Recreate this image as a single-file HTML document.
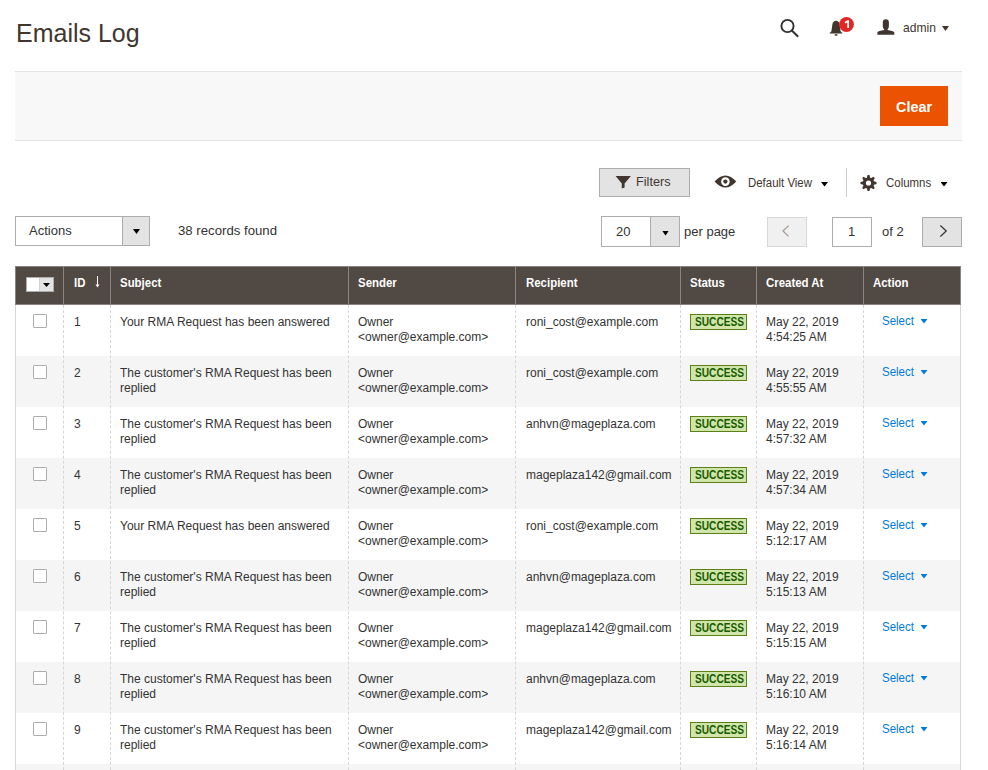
<!DOCTYPE html>
<html><head><meta charset="utf-8">
<style>
html,body{margin:0;padding:0;background:#fff;width:988px;height:770px;overflow:hidden;position:relative;font-family:"Liberation Sans",sans-serif;color:#333}
.a{position:absolute}
.title{position:absolute;left:16px;top:16.5px;font-size:25px;color:#41362f;line-height:32px;white-space:nowrap}
.bar{position:absolute;left:15px;top:71px;width:947px;height:68px;background:#f8f8f8;border-top:1px solid #e3e3e3;border-bottom:1px solid #e3e3e3}
.clear{position:absolute;left:880px;top:86px;width:68px;height:40px;background:#eb5202;color:#fff;font-weight:bold;font-size:14.4px;line-height:42px;text-align:center}
.btn{position:absolute;box-sizing:border-box;border:1px solid #adadad;background:#e3e3e3}
.txt{position:absolute;white-space:nowrap;font-size:13px;color:#333}
.tri{position:absolute;width:7px;height:5px;background:#000;clip-path:polygon(0 0,100% 0,50% 100%)}
.hdr{position:absolute;left:15px;top:266px;width:946px;height:39px;background:#514943;box-sizing:border-box;border:1px solid #8a837f}
.th{position:absolute;top:275px;font-size:13px;font-weight:bold;color:#fff;white-space:nowrap;line-height:16px;transform:scaleX(0.88);transform-origin:0 0}
.hvd{position:absolute;top:266px;width:1px;height:39px;background:#8a837f}
.row{position:absolute;left:15px;width:946px;height:51px}
.row .t{position:absolute;top:10px;font-size:12px;line-height:15px;white-space:nowrap;margin-left:-15px}
.cb{position:absolute;left:18px;top:9px;width:14px;height:14px;box-sizing:border-box;border:1px solid #adadad;border-radius:1px;background:#fff}
.badge{position:absolute;left:675px;top:9px;width:57px;height:16px;box-sizing:border-box;background:#d0e5a9;border:1px solid #5b8116;color:#185b00;font-weight:bold;font-size:12px;line-height:14px;text-align:left;padding-left:4px;white-space:nowrap}
.badge span{display:inline-block;transform:scaleX(0.845);transform-origin:0 0}
.sel{position:absolute;left:867px;top:9px;font-size:12.3px;line-height:15px;color:#007bdb}
.sel span{display:inline-block;transform:scaleX(0.935);transform-origin:0 0}
.sel i{position:absolute;left:38.5px;top:5px;width:7px;height:4.5px;background:#007bdb;clip-path:polygon(0 0,100% 0,50% 100%)}
.vd{position:absolute;top:305px;height:465px;width:0;border-left:1px dashed #d6d6d6}
.lb{position:absolute;top:305px;height:465px;width:1px;background:#d6d6d6}
</style></head><body>
<div class="title">Emails Log</div>

<!-- header icons -->
<svg class="a" style="left:778px;top:17px" width="22" height="22" viewBox="0 0 22 22"><circle cx="9.5" cy="9" r="6.1" fill="none" stroke="#303030" stroke-width="1.9"/><line x1="13.8" y1="13.5" x2="20.2" y2="19.8" stroke="#303030" stroke-width="2"/></svg>
<svg class="a" style="left:828px;top:19px" width="18" height="18" viewBox="0 0 18 18"><path d="M8 1.8C10 1.8 11.2 3.4 11.6 5.2L12.6 12.2L14.6 14.6H1.4L3.4 12.2L4.4 5.2C4.8 3.4 6 1.8 8 1.8z" fill="#41362f"/><rect x="6.8" y="15.2" width="2.6" height="1.5" fill="#41362f"/></svg>
<svg class="a" style="left:839px;top:17px" width="15" height="15" viewBox="0 0 15 15"><circle cx="7.5" cy="7.5" r="7.4" fill="#e22626"/><path d="M5.6 5.0L8.4 3.2H10V11H8.3V5.4L6.2 6.4z" fill="#fff"/></svg>
<svg class="a" style="left:877px;top:18px" width="18" height="18" viewBox="0 0 18 18"><path d="M8.85 1.3C10.8 1.3 11.9 2.3 11.9 4.2V8.2C11.9 9.6 11.2 10.6 10.6 11.3V12C13.5 12.5 17.3 13.2 17.3 14.5V16.8H0.4V14.5C0.4 13.2 4.2 12.5 7.1 12V11.3C6.5 10.6 5.8 9.6 5.8 8.2V4.2C5.8 2.3 6.9 1.3 8.85 1.3z" fill="#41362f"/></svg>
<div class="txt" style="left:903px;top:20px;font-size:12.1px;color:#41362f;line-height:16px">admin</div>
<div class="tri" style="left:942px;top:26px;background:#41362f"></div>

<div class="bar"></div>
<div class="clear">Clear</div>

<!-- filters row -->
<div class="btn" style="left:599px;top:168px;width:91px;height:29px"></div>
<svg class="a" style="left:615px;top:176px" width="17" height="13" viewBox="0 0 17 13"><path d="M0.6 0H15.9L9.6 7.6V11.6L6.8 12.4V7.6Z" fill="#41362f"/></svg>
<div class="txt" style="left:636px;top:174px;font-size:12.7px;color:#41362f;line-height:16px">Filters</div>
<svg class="a" style="left:714px;top:175px" width="23" height="13" viewBox="0 0 23 13"><path d="M0.5 6.5Q11.4 -5.5 22.3 6.5Q11.4 18.5 0.5 6.5z" fill="#41362f"/><circle cx="11.4" cy="6.6" r="4.3" fill="#fff"/><circle cx="11.4" cy="6.6" r="2.1" fill="#41362f"/></svg>
<div class="txt" style="left:748px;top:175px;font-size:12px;color:#41362f;line-height:16px;transform:scaleX(0.953);transform-origin:0 0">Default View</div>
<div class="tri" style="left:821px;top:182px;height:4.5px"></div>
<div class="a" style="left:846px;top:168px;width:1px;height:29px;background:#cccccc"></div>
<svg class="a" style="left:860px;top:175px" width="17" height="16" viewBox="0 0 17 16"><path fill="#41362f" fill-rule="evenodd" d="M13.00 6.10 L16.50 7.05 L16.50 8.95 L13.00 9.90ZM13.03 9.84 L14.83 12.99 L13.49 14.33 L10.34 12.53ZM10.40 12.50 L9.45 16.00 L7.55 16.00 L6.60 12.50ZM6.66 12.53 L3.51 14.33 L2.17 12.99 L3.97 9.84ZM4.00 9.90 L0.50 8.95 L0.50 7.05 L4.00 6.10ZM3.97 6.16 L2.17 3.01 L3.51 1.67 L6.66 3.47ZM6.60 3.50 L7.55 0.00 L9.45 -0.00 L10.40 3.50ZM10.34 3.47 L13.49 1.67 L14.83 3.01 L13.03 6.16Z"/><circle cx="8.5" cy="8" r="5.6" fill="#41362f"/><circle cx="8.5" cy="8" r="2.6" fill="#fff"/></svg>
<div class="txt" style="left:886px;top:175px;font-size:12px;color:#41362f;line-height:16px;transform:scaleX(0.955);transform-origin:0 0">Columns</div>
<div class="tri" style="left:940.5px;top:182px;height:4.5px"></div>

<!-- actions row -->
<div class="a" style="left:15px;top:216px;width:135px;height:30px;box-sizing:border-box;border:1px solid #adadad;background:#fff"></div>
<div class="a" style="left:122px;top:216px;width:28px;height:30px;box-sizing:border-box;border:1px solid #adadad;background:#e3e3e3"></div>
<div class="tri" style="left:133px;top:229px"></div>
<div class="txt" style="left:29px;top:223px;line-height:16px">Actions</div>
<div class="txt" style="left:178px;top:223px;font-size:13.2px;line-height:16px">38 records found</div>

<div class="a" style="left:601px;top:216px;width:79px;height:31px;box-sizing:border-box;border:1px solid #adadad;background:#fff"></div>
<div class="a" style="left:650px;top:216px;width:30px;height:31px;box-sizing:border-box;border:1px solid #adadad;background:#e3e3e3"></div>
<div class="tri" style="left:662px;top:230.5px"></div>
<div class="txt" style="left:616px;top:224px;line-height:16px">20</div>
<div class="txt" style="left:684px;top:224px;line-height:16px">per page</div>

<div class="a" style="left:767px;top:217px;width:40px;height:30px;box-sizing:border-box;border:1px solid #d6d6d6;background:#f0f0f0"></div>
<svg class="a" style="left:780.5px;top:223.5px" width="10" height="14" viewBox="0 0 10 14"><path d="M7.6 1.6L2 7l5.6 5.4" fill="none" stroke="#a79d95" stroke-width="1.3"/></svg>
<div class="a" style="left:832px;top:217px;width:40px;height:30px;box-sizing:border-box;border:1px solid #adadad;background:#fff"></div>
<div class="txt" style="left:848px;top:224px;line-height:16px">1</div>
<div class="txt" style="left:882px;top:224px;line-height:16px">of 2</div>
<div class="btn" style="left:922px;top:217px;width:40px;height:30px"></div>
<svg class="a" style="left:937px;top:223.5px" width="12" height="14" viewBox="0 0 12 14"><path d="M3.4 1.6L9.2 7l-5.8 5.4" fill="none" stroke="#41362f" stroke-width="1.3"/></svg>

<!-- table -->
<div class="hdr"></div>
<div class="hvd" style="left:63px"></div><div class="hvd" style="left:110px"></div><div class="hvd" style="left:348px"></div><div class="hvd" style="left:515px"></div><div class="hvd" style="left:680px"></div><div class="hvd" style="left:756px"></div><div class="hvd" style="left:863px"></div>
<div class="a" style="left:26px;top:277px;width:28px;height:15px;box-sizing:border-box;border:1px solid #adadad;background:#e3e3e3"></div>
<div class="a" style="left:27px;top:278px;width:12px;height:13px;background:#fff;border-right:1px solid #d0d0d0"></div>
<div class="a" style="left:43px;top:283px;width:7px;height:4px;background:#000;clip-path:polygon(0 0,100% 0,50% 100%)"></div>
<div class="th" style="left:74px">ID</div>
<svg class="a" style="left:94px;top:276px" width="8" height="12" viewBox="0 0 8 12"><path d="M3.5 0v10" stroke="#fff" stroke-width="1"/><path d="M1.5 8.5h4l-2 3z" fill="#fff"/></svg>
<div class="th" style="left:120px">Subject</div>
<div class="th" style="left:358px">Sender</div>
<div class="th" style="left:526px">Recipient</div>
<div class="th" style="left:690px">Status</div>
<div class="th" style="left:766px">Created At</div>
<div class="th" style="left:873px">Action</div>

<div class="row" style="top:305px;background:#fff">
<div class="cb"></div>
<div class="t" style="left:74px">1</div>
<div class="t" style="left:120px">Your RMA Request has been answered</div>
<div class="t" style="left:358px">Owner<br>&lt;owner@example.com&gt;</div>
<div class="t" style="left:526px">roni_cost@example.com</div>
<div class="badge"><span>SUCCESS</span></div>
<div class="t" style="left:766px">May 22, 2019<br>4:54:25 AM</div>
<div class="sel"><span>Select</span><i></i></div>
</div><div class="row" style="top:356px;background:#f5f5f5">
<div class="cb"></div>
<div class="t" style="left:74px">2</div>
<div class="t" style="left:120px">The customer's RMA Request has been<br>replied</div>
<div class="t" style="left:358px">Owner<br>&lt;owner@example.com&gt;</div>
<div class="t" style="left:526px">roni_cost@example.com</div>
<div class="badge"><span>SUCCESS</span></div>
<div class="t" style="left:766px">May 22, 2019<br>4:55:55 AM</div>
<div class="sel"><span>Select</span><i></i></div>
</div><div class="row" style="top:407px;background:#fff">
<div class="cb"></div>
<div class="t" style="left:74px">3</div>
<div class="t" style="left:120px">The customer's RMA Request has been<br>replied</div>
<div class="t" style="left:358px">Owner<br>&lt;owner@example.com&gt;</div>
<div class="t" style="left:526px">anhvn@mageplaza.com</div>
<div class="badge"><span>SUCCESS</span></div>
<div class="t" style="left:766px">May 22, 2019<br>4:57:32 AM</div>
<div class="sel"><span>Select</span><i></i></div>
</div><div class="row" style="top:458px;background:#f5f5f5">
<div class="cb"></div>
<div class="t" style="left:74px">4</div>
<div class="t" style="left:120px">The customer's RMA Request has been<br>replied</div>
<div class="t" style="left:358px">Owner<br>&lt;owner@example.com&gt;</div>
<div class="t" style="left:526px">mageplaza142@gmail.com</div>
<div class="badge"><span>SUCCESS</span></div>
<div class="t" style="left:766px">May 22, 2019<br>4:57:34 AM</div>
<div class="sel"><span>Select</span><i></i></div>
</div><div class="row" style="top:509px;background:#fff">
<div class="cb"></div>
<div class="t" style="left:74px">5</div>
<div class="t" style="left:120px">Your RMA Request has been answered</div>
<div class="t" style="left:358px">Owner<br>&lt;owner@example.com&gt;</div>
<div class="t" style="left:526px">roni_cost@example.com</div>
<div class="badge"><span>SUCCESS</span></div>
<div class="t" style="left:766px">May 22, 2019<br>5:12:17 AM</div>
<div class="sel"><span>Select</span><i></i></div>
</div><div class="row" style="top:560px;background:#f5f5f5">
<div class="cb"></div>
<div class="t" style="left:74px">6</div>
<div class="t" style="left:120px">The customer's RMA Request has been<br>replied</div>
<div class="t" style="left:358px">Owner<br>&lt;owner@example.com&gt;</div>
<div class="t" style="left:526px">anhvn@mageplaza.com</div>
<div class="badge"><span>SUCCESS</span></div>
<div class="t" style="left:766px">May 22, 2019<br>5:15:13 AM</div>
<div class="sel"><span>Select</span><i></i></div>
</div><div class="row" style="top:611px;background:#fff">
<div class="cb"></div>
<div class="t" style="left:74px">7</div>
<div class="t" style="left:120px">The customer's RMA Request has been<br>replied</div>
<div class="t" style="left:358px">Owner<br>&lt;owner@example.com&gt;</div>
<div class="t" style="left:526px">mageplaza142@gmail.com</div>
<div class="badge"><span>SUCCESS</span></div>
<div class="t" style="left:766px">May 22, 2019<br>5:15:15 AM</div>
<div class="sel"><span>Select</span><i></i></div>
</div><div class="row" style="top:662px;background:#f5f5f5">
<div class="cb"></div>
<div class="t" style="left:74px">8</div>
<div class="t" style="left:120px">The customer's RMA Request has been<br>replied</div>
<div class="t" style="left:358px">Owner<br>&lt;owner@example.com&gt;</div>
<div class="t" style="left:526px">anhvn@mageplaza.com</div>
<div class="badge"><span>SUCCESS</span></div>
<div class="t" style="left:766px">May 22, 2019<br>5:16:10 AM</div>
<div class="sel"><span>Select</span><i></i></div>
</div><div class="row" style="top:713px;background:#fff">
<div class="cb"></div>
<div class="t" style="left:74px">9</div>
<div class="t" style="left:120px">The customer's RMA Request has been<br>replied</div>
<div class="t" style="left:358px">Owner<br>&lt;owner@example.com&gt;</div>
<div class="t" style="left:526px">mageplaza142@gmail.com</div>
<div class="badge"><span>SUCCESS</span></div>
<div class="t" style="left:766px">May 22, 2019<br>5:16:14 AM</div>
<div class="sel"><span>Select</span><i></i></div>
</div><div class="row" style="top:764px;background:#f5f5f5">
<div class="cb"></div>
<div class="t" style="left:74px">10</div>
<div class="t" style="left:120px">The customer's RMA Request has been<br>replied</div>
<div class="t" style="left:358px">Owner<br>&lt;owner@example.com&gt;</div>
<div class="t" style="left:526px">anhvn@mageplaza.com</div>
<div class="badge"><span>SUCCESS</span></div>
<div class="t" style="left:766px">May 22, 2019<br>5:20:00 AM</div>
<div class="sel"><span>Select</span><i></i></div>
</div>
<div class="vd" style="left:63px"></div><div class="vd" style="left:110px"></div><div class="vd" style="left:348px"></div><div class="vd" style="left:515px"></div><div class="vd" style="left:680px"></div><div class="vd" style="left:756px"></div><div class="vd" style="left:863px"></div>
<div class="lb" style="left:15px"></div>
<div class="lb" style="left:960px"></div>
</body></html>
